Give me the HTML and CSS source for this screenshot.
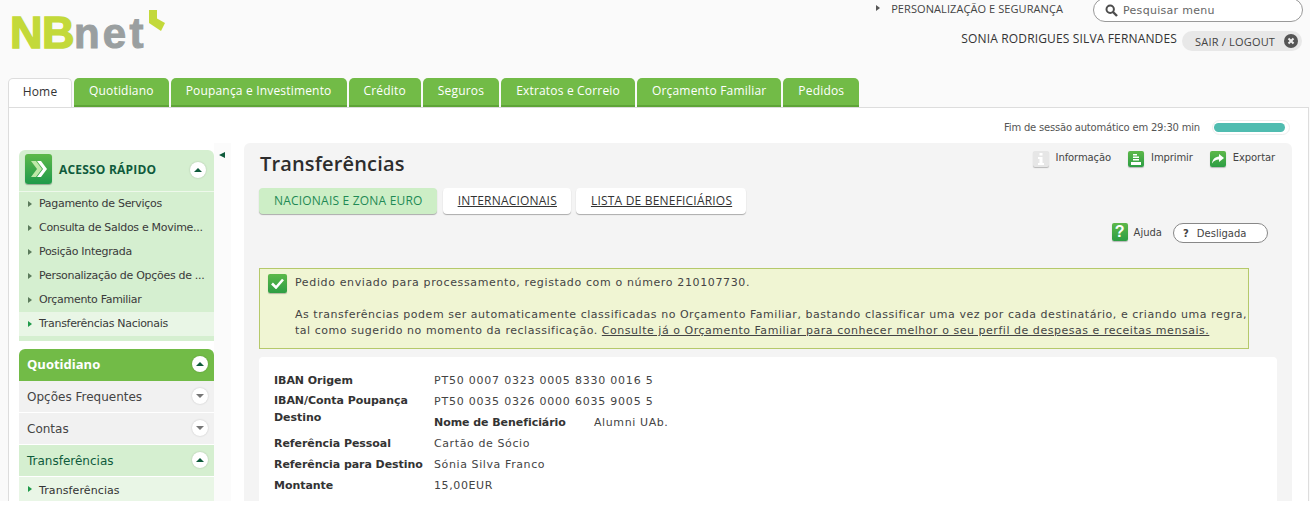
FILE: index.html
```html
<!DOCTYPE html>
<html lang="pt">
<head>
    <meta charset="UTF-8">
    <title>NBnet - Transferências</title>
    <link rel="stylesheet" href="styles.css">
</head>
<body>
<div class="page">
    <header class="top">
        <div class="logo">
            <span class="logo-nb">NB</span><span class="logo-net">net</span>
            <svg class="logo-mark" width="16" height="21" viewBox="0 0 16 21"><path d="M0 0h8v8.500l8 4.500-4 8L0 13z" fill="#c3d93a"/></svg>
        </div>
        <div class="top-right">
            <div class="top-line">
                <span class="pers">PERSONALIZAÇÃO E SEGURANÇA</span>
                <div class="search">
                    <svg width="13" height="13" viewBox="0 0 13 13"><circle cx="5.200" cy="5.200" r="3.700" fill="none" stroke="#4d4d4d" stroke-width="2"/><path d="M8 8l4 4" stroke="#4d4d4d" stroke-width="2.400"/></svg>
                    <span>Pesquisar menu</span>
                </div>
            </div>
            <div class="user-line">
                <span class="user">SONIA RODRIGUES SILVA FERNANDES</span>
                <div class="logout">
                    <span>SAIR / LOGOUT</span>
                    <svg width="14" height="14" viewBox="0 0 14 14"><circle cx="7" cy="7" r="7" fill="#555"/><path d="M4.500 4.500l5 5M9.500 4.500l-5 5" stroke="#eee" stroke-width="2"/></svg>
                </div>
            </div>
        </div>
    </header>

    <nav class="tabs">
        <a class="tab active">Home</a>
        <a class="tab">Quotidiano</a>
        <a class="tab">Poupança e Investimento</a>
        <a class="tab">Crédito</a>
        <a class="tab">Seguros</a>
        <a class="tab">Extratos e Correio</a>
        <a class="tab">Orçamento Familiar</a>
        <a class="tab">Pedidos</a>
    </nav>

    <main class="frame">
        <div class="session">
            <span>Fim de sessão automático em 29:30 min</span>
            <div class="session-bar"><div class="session-fill"></div></div>
        </div>
        <div class="columns">
            <aside class="sidebar">
                <section class="quick">
                    <div class="quick-head">
                        <span class="quick-icon">
                            <svg width="18" height="16" viewBox="0 0 18 16"><path d="M1 0h5l6 8-6 8H1l6-8z" fill="#bfe8a8"/><path d="M7 0h4l6 8-6 8H7l6-8z" fill="#fff"/></svg>
                        </span>
                        <span class="quick-title">ACESSO RÁPIDO</span>
                        <span class="round up"></span>
                    </div>
                    <ul class="quick-list">
                        <li>Pagamento de Serviços</li>
                        <li>Consulta de Saldos e Movime...</li>
                        <li>Posição Integrada</li>
                        <li>Personalização de Opções de ...</li>
                        <li>Orçamento Familiar</li>
                        <li class="current">Transferências Nacionais</li>
                    </ul>
                </section>
                <section class="menu">
                    <div class="menu-row main"><span>Quotidiano</span><span class="round up"></span></div>
                    <div class="menu-row"><span>Opções Frequentes</span><span class="round down"></span></div>
                    <div class="menu-row"><span>Contas</span><span class="round down"></span></div>
                    <div class="menu-row open"><span>Transferências</span><span class="round up"></span></div>
                    <div class="menu-sub">Transferências</div>
                </section>
            </aside>
            <div class="collapse"><span class="collapse-arrow"></span></div>
            <section class="panel">
                <div class="panel-head">
                    <h1>Transferências</h1>
                    <div class="tools">
                        <span class="tool"><span class="ico grey">
                            <svg width="8" height="12" viewBox="0 0 8 12"><path d="M2.500 0h3v2.500h-3zM1 4h4.500v6H7v2H1v-2h1.500V6H1z" fill="#fff"/></svg>
                        </span>Informação</span>
                        <span class="tool"><span class="ico">
                            <svg width="10" height="11" viewBox="0 0 10 11"><path d="M2 0h4v1.500H2zM2 2.500h6V4H2zM2 5h6v1.500H2zM0 8h10v3H0z" fill="#fff"/></svg>
                        </span>Imprimir</span>
                        <span class="tool"><span class="ico">
                            <svg width="12" height="10" viewBox="0 0 12 10"><path d="M7 0l5 4-5 4V5.500C4 5.500 2 6.500 0 9.500 .5 5.500 3 2.800 7 2.500z" fill="#fff"/></svg>
                        </span>Exportar</span>
                    </div>
                </div>
                <div class="subtabs">
                    <a class="subtab active">NACIONAIS E ZONA EURO</a>
                    <a class="subtab">INTERNACIONAIS</a>
                    <a class="subtab">LISTA DE BENEFICIÁRIOS</a>
                </div>
                <div class="help">
                    <span class="ico big">?</span>
                    <span class="help-label">Ajuda</span>
                    <div class="help-toggle"><b>?</b><span>Desligada</span></div>
                </div>
                <div class="notice">
                    <span class="ico check">
                        <svg width="13" height="11" viewBox="0 0 13 11"><path d="M1 5.500l4 4 7-8" fill="none" stroke="#fff" stroke-width="2.600"/></svg>
                    </span>
                    <div class="notice-text">
                        <p class="notice-first">Pedido enviado para processamento, registado com o número 210107730.</p>
                        <p>As transferências podem ser automaticamente classificadas no Orçamento Familiar, bastando classificar uma vez por cada destinatário, e criando uma regra, tal como sugerido no momento da reclassificação. <a>Consulte já o Orçamento Familiar para conhecer melhor o seu perfil de despesas e receitas mensais.</a></p>
                    </div>
                </div>
                <div class="details">
                    <div class="label">IBAN Origem</div>
                    <div class="value iban">PT50 0007 0323 0005 8330 0016 5</div>
                    <div class="label tall">IBAN/Conta Poupança Destino</div>
                    <div class="value iban">PT50 0035 0326 0000 6035 9005 5</div>
                    <div class="value nested"><span class="label">Nome de Beneficiário</span><span>Alumni UAb.</span></div>
                    <div class="label">Referência Pessoal</div>
                    <div class="value">Cartão de Sócio</div>
                    <div class="label">Referência para Destino</div>
                    <div class="value">Sónia Silva Franco</div>
                    <div class="label">Montante</div>
                    <div class="value">15,00EUR</div>
                </div>
            </section>
        </div>
    </main>
</div>
</body>
</html>
```

FILE: styles.css
```css
* {
    box-sizing: border-box;
}
body {
    margin: 0;
    background-color: #fff;
    font-family: "DejaVu Sans", Verdana, sans-serif;
    font-size: 11px;
    color: #333;
}
p, h1, ul {
    margin: 0;
    padding: 0;
}
.page {
    height: 501px;
    overflow: hidden;
    background-color: #fafafa;
}

/* top */
.top {
    height: 78px;
    display: flex;
    justify-content: space-between;
}
.logo {
    display: flex;
    align-items: baseline;
    height: 62px;
    padding: 7px 0 0 10px;
    font-family: "Liberation Sans", Arial, sans-serif;
    font-weight: bold;
    line-height: 52px;
}
.logo-nb {
    font-size: 45px;
    letter-spacing: -0.5px;
    color: #c3d93a;
    -webkit-text-stroke: 1.5px #c3d93a;
}
.logo-net {
    font-size: 42px;
    letter-spacing: 3.2px;
    color: #9a9fa0;
    -webkit-text-stroke: 1px #9a9fa0;
}
.logo-mark {
    align-self: flex-start;
    margin: 3px 0 0 2px;
}
.top-right {
    width: 440px;
    padding-right: 7px;
}
.top-line {
    height: 31px;
    display: flex;
    justify-content: flex-end;
}
.pers {
    margin: 2px 30px 0 0;
    line-height: 13px;
    font-family: "Open Sans", sans-serif;
    letter-spacing: 0.08px;
    color: #444;
    position: relative;
}
.pers::before {
    content: "";
    position: absolute;
    left: -15px;
    top: 3px;
    border-left: 4px solid #555;
    border-top: 3px solid transparent;
    border-bottom: 3px solid transparent;
}
.search {
    width: 210px;
    height: 24px;
    margin-top: -2px;
    padding: 1px 0 0 11px;
    display: flex;
    align-items: center;
    gap: 5px;
    background-color: #fff;
    border: 1px solid #999;
    border-radius: 12px;
    color: #666;
    letter-spacing: 0.3px;
}
.user-line {
    display: flex;
    justify-content: flex-end;
    align-items: flex-start;
    padding-right: 1px;
}
.user {
    margin-right: 5px;
    line-height: 16px;
    font-family: "Open Sans", sans-serif;
    font-size: 12px;
    letter-spacing: 0.15px;
    color: #333;
}
.logout {
    width: 120px;
    height: 20px;
    padding: 0 4px 0 13px;
    display: flex;
    align-items: center;
    justify-content: space-between;
    background-color: #e8e8e8;
    border-radius: 10px;
    font-family: "Open Sans", sans-serif;
    letter-spacing: 0.2px;
    color: #444;
}

/* tabs */
.tabs {
    height: 29px;
    padding-left: 8px;
    display: flex;
    gap: 2px;
}
.tab {
    height: 29px;
    padding: 0 15px;
    line-height: 25px;
    background-color: #72bb47;
    border-bottom: 2px solid #5ea437;
    border-radius: 5px 5px 0 0;
    color: #fff;
    font-size: 12px;
    font-family: "Open Sans", sans-serif;
    font-weight: 500;
    letter-spacing: 0.18px;
}
.tab.active {
    width: 64px;
    padding: 0;
    text-align: center;
    background-color: #fff;
    border: 1px solid #ddd;
    border-bottom: none;
    color: #333;
    font-weight: 400;
    position: relative;
    z-index: 1;
}

/* frame */
.frame {
    width: 1301px;
    height: 394px;
    margin-left: 8px;
    background-color: #fff;
    border: 1px solid #ddd;
    border-bottom: none;
}
.session {
    height: 35px;
    padding: 3px 18px 0 0;
    display: flex;
    justify-content: flex-end;
    align-items: center;
    gap: 12px;
    font-size: 10px;
    letter-spacing: -0.2px;
    color: #555;
}
.session-bar {
    width: 78px;
    height: 15px;
    padding: 2px 0 2px 1px;
    background-color: #fff;
    border: 1px solid #eee;
    border-radius: 8px;
}
.session-fill {
    width: 71px;
    height: 100%;
    background-color: #50bcb0;
    border-radius: 6px;
}
.columns {
    display: flex;
    padding-left: 10px;
}

/* sidebar */
.sidebar {
    width: 195px;
    margin-top: 7px;
    flex: none;
}
.quick {
    height: 191px;
    background-color: #d5efd0;
    border-radius: 6px 6px 0 0;
}
.quick-head {
    height: 42px;
    padding: 4px 8px 0 6px;
    display: flex;
    align-items: flex-start;
    border-bottom: 1px solid #eef8eb;
}
.quick-icon {
    width: 27px;
    height: 30px;
    display: flex;
    align-items: center;
    justify-content: center;
    background: linear-gradient(#5db84a, #1f9a4a);
    border-radius: 3px;
    box-shadow: 0 1px 1px rgba(0,0,0,0.3);
}
.quick-title {
    flex: 1;
    margin: 7px 0 0 7px;
    line-height: 18px;
    font-family: "Open Sans", sans-serif;
    font-size: 12px;
    font-weight: 700;
    letter-spacing: 0.2px;
    color: #0f5b3c;
}
.round {
    width: 16px;
    height: 16px;
    margin-top: 8px;
    display: flex;
    align-items: center;
    justify-content: center;
    background-color: #fff;
    border-radius: 50%;
    box-shadow: 0 0 2px rgba(0,0,0,0.2);
}
.round::after {
    content: "";
    border-left: 4px solid transparent;
    border-right: 4px solid transparent;
}
.round.up::after {
    border-bottom: 4px solid #0f5b3c;
}
.round.down::after {
    border-top: 4px solid #777;
}
.quick-list {
    list-style: none;
}
.quick-list li {
    height: 24px;
    padding-left: 20px;
    line-height: 24px;
    letter-spacing: -0.3px;
    color: #3a3a3a;
    position: relative;
    white-space: nowrap;
}
.quick-list li::before, .menu-sub::before {
    content: "";
    position: absolute;
    left: 9px;
    top: 9px;
    border-left: 4px solid #5b7a5b;
    border-top: 3px solid transparent;
    border-bottom: 3px solid transparent;
}
.quick-list li.current {
    background-color: #e9f6e6;
}
.quick-list li.current::before, .menu-sub::before {
    border-left-color: #1f9a4a;
}
.menu {
    margin-top: 8px;
}
.menu-row {
    height: 32px;
    padding: 0 6px 0 8px;
    display: flex;
    justify-content: space-between;
    align-items: flex-start;
    line-height: 32px;
    font-size: 12px;
    background-color: #f1f1f1;
    border-bottom: 1px solid #fff;
    color: #444;
}
.menu-row .round {
    margin-top: 7px;
}
.menu-row.main {
    line-height: 30px;
    background-color: #72bb47;
    border-bottom: none;
    border-radius: 6px 6px 0 0;
    color: #fff;
    font-weight: bold;
    font-family: "Open Sans", sans-serif;
    font-size: 13px;
}
.menu-row.open {
    background-color: #d5efd0;
    color: #0f5b3c;
}
.menu-sub {
    height: 24px;
    padding-left: 20px;
    line-height: 28px;
    letter-spacing: 0.1px;
    background-color: #e9f6e6;
    position: relative;
}
.collapse {
    width: 17px;
    margin-right: 13px;
    flex: none;
    background-color: #fbfbfb;
}
.collapse-arrow {
    display: block;
    margin: 9px 0 0 5px;
    width: 0;
    border-right: 6px solid #0f5b3c;
    border-top: 3.500px solid transparent;
    border-bottom: 3.500px solid transparent;
}

/* panel */
.panel {
    width: 1048px;
    height: 358px;
    padding: 0 15px;
    background-color: #f4f4f4;
    border-radius: 6px 6px 0 0;
}
.panel-head {
    height: 45px;
    padding-top: 7px;
    display: flex;
    justify-content: space-between;
}
h1 {
    margin-left: 1px;
    font-family: "Open Sans", sans-serif;
    font-size: 20px;
    line-height: 27px;
    font-weight: 600;
    letter-spacing: 0.15px;
    color: #2d2d2d;
}
.tools {
    display: flex;
    gap: 17px;
    padding-top: 1px;
    padding-right: 2px;
    font-size: 10px;
    letter-spacing: -0.1px;
    color: #444;
}
.tool {
    display: flex;
    align-items: flex-start;
    gap: 7px;
    line-height: 14px;
}
.ico {
    width: 16px;
    height: 16px;
    display: flex;
    align-items: center;
    justify-content: center;
    background: linear-gradient(#5db84a, #2d9e44);
    border-radius: 2px;
    box-shadow: 0 1px 1px rgba(0,0,0,0.25);
}
.ico.grey {
    background: #e6e6e6;
}
.subtabs {
    display: flex;
    gap: 5px;
}
.subtab {
    height: 26px;
    padding: 0 14px 0 15px;
    line-height: 25px;
    background-color: #fff;
    border-radius: 4px;
    box-shadow: 0 1px 1px rgba(0,0,0,0.3);
    font-family: "Open Sans", sans-serif;
    font-size: 12px;
    letter-spacing: 0.2px;
    color: #333;
    text-decoration: underline;
}
.subtab.active {
    margin-right: 1px;
    background-color: #cdeec6;
    color: #1f8a55;
    text-decoration: none;
}
.help {
    height: 54px;
    padding: 9px 9px 0 0;
    display: flex;
    justify-content: flex-end;
    align-items: flex-start;
    font-size: 10px;
}
.ico.big {
    width: 16px;
    height: 18px;
    font-family: "Liberation Sans", sans-serif;
    font-size: 16px;
    font-weight: bold;
    color: #fff;
}
.help-label {
    margin: 3px 11px 0 6px;
    line-height: 14px;
    color: #444;
}
.help-toggle {
    width: 95px;
    height: 20px;
    padding-left: 9px;
    display: flex;
    align-items: center;
    gap: 8px;
    background-color: #fff;
    border: 1px solid #888;
    border-radius: 10px;
    color: #444;
}
.notice {
    width: 990px;
    height: 81px;
    padding: 6px 0 5px 8px;
    display: flex;
    gap: 8px;
    background-color: #f0f5d3;
    border: 1px solid #b5c96a;
    letter-spacing: 0.53px;
}
.ico.check {
    width: 19px;
    height: 19px;
    margin-top: -1px;
    flex: none;
}
.notice-text {
    flex: 1;
    line-height: 16px;
    color: #444;
}
.notice-first {
    letter-spacing: 0.63px;
}
.notice-text p + p {
    margin-top: 16px;
}
.notice-text a {
    text-decoration: underline;
}
.details {
    width: 1018px;
    height: 160px;
    margin-top: 8px;
    padding: 13px 15px;
    display: grid;
    grid-template-columns: 160px 1fr;
    grid-auto-rows: 21px;
    background-color: #fff;
    border-radius: 4px 4px 0 0;
    line-height: 21px;
}
.label {
    font-weight: bold;
    letter-spacing: -0.05px;
    color: #333;
}
.label.tall {
    grid-row: span 2;
    line-height: 17px;
    padding-top: 1px;
}
.nested {
    display: flex;
}
.nested .label {
    width: 160px;
}
.value {
    letter-spacing: 0.6px;
    color: #444;
}
.value.iban {
    letter-spacing: 0.78px;
}
```
